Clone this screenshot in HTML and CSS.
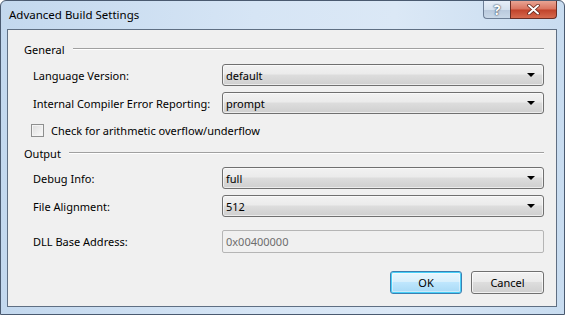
FILE: index.html
```html
<!DOCTYPE html>
<html>
<head>
    <title>Advanced Build Settings</title>
    <link rel="stylesheet" href="styles.css">
</head>
<body>
    <div class="window">
        <!-- Title bar -->
        <div class="titlebar">
            <span class="title">Advanced Build Settings</span>
            <div class="caption-buttons">
                <div class="cap-btn help">?</div>
                <div class="cap-btn close">
                    <svg width="13" height="11" viewBox="0 0 13 11">
                        <path d="M2 1.5 L11 9.5 M11 1.5 L2 9.5" stroke="#5b1e14" stroke-width="3.4" stroke-linecap="round"/>
                        <path d="M2 1.5 L11 9.5 M11 1.5 L2 9.5" stroke="#ffffff" stroke-width="2" stroke-linecap="round"/>
                    </svg>
                </div>
            </div>
        </div>

        <div class="client">
            <div class="group-header"><span>General</span><div class="rule"></div></div>

            <div class="row">
                <label>Language Version:</label>
                <div class="combo"><span>default</span><i class="arrow"></i></div>
            </div>
            <div class="row">
                <label>Internal Compiler Error Reporting:</label>
                <div class="combo"><span>prompt</span><i class="arrow"></i></div>
            </div>
            <div class="check-row">
                <div class="checkbox"></div>
                <span>Check for arithmetic overflow/underflow</span>
            </div>

            <div class="group-header output"><span>Output</span><div class="rule"></div></div>

            <div class="row debug">
                <label>Debug Info:</label>
                <div class="combo"><span>full</span><i class="arrow"></i></div>
            </div>
            <div class="row">
                <label>File Alignment:</label>
                <div class="combo"><span>512</span><i class="arrow"></i></div>
            </div>
            <div class="row address">
                <label>DLL Base Address:</label>
                <div class="textbox">0x00400000</div>
            </div>

            <div class="buttons">
                <div class="button default">OK</div>
                <div class="button">Cancel</div>
            </div>
        </div>
    </div>
</body>
</html>
```

FILE: styles.css
```css
body {
    margin: 0;
    font-family: 'Noto Sans', 'Open Sans', sans-serif;
    font-size: 11px;
    color: #000000;
    background: #ffffff;
    white-space: nowrap;
}

.window {
    width: 565px;
    height: 315px;
    box-sizing: border-box;
    border: 1px solid #4a5a70;
    border-radius: 6px 6px 0 0;
    background: linear-gradient(to right, #c3d8ee 0%, #d6e5f5 45%, #dbe8f6 70%, #c8dcf0 100%);
    padding: 0 7px 7px 6px;
    display: flex;
    flex-direction: column;
}

.titlebar {
    height: 28px;
    display: flex;
    align-items: flex-start;
}

.title {
    margin-top: 6px;
    margin-left: 2px;
    font-size: 11.5px;
    color: #000000;
}

.caption-buttons {
    margin-left: auto;
    display: flex;
}

.cap-btn {
    height: 18px;
    box-sizing: border-box;
    border: 1px solid #6e7f96;
    border-top: none;
    display: flex;
    align-items: center;
    justify-content: center;
}

.help {
    width: 27px;
    border-right: none;
    border-radius: 0 0 0 4px;
    background: linear-gradient(#e6eef8 0%, #d5e1ee 50%, #b9c9dc 51%, #c9d8e8 100%);
    color: #ffffff;
    font-weight: bold;
    font-size: 14px;
    text-shadow: 0 0 2px #2d3d55, 0 0 1px #2d3d55;
}

.close {
    width: 47px;
    border-color: #6a2e25;
    border-radius: 0 0 4px 0;
    background: linear-gradient(#e8a493 0%, #d9735e 48%, #c0422a 52%, #d66a4e 100%);
}

.client {
    flex: 1;
    border: 1px solid #5f6f83;
    background: #f0f0f0;
    padding: 0 12px 0 16px;
    display: flex;
    flex-direction: column;
}

.group-header {
    margin-top: 11px;
    height: 16px;
    display: flex;
    align-items: center;
}

.group-header .rule {
    flex: 1;
    height: 0;
    border-top: 1px solid #a0a0a0;
    border-bottom: 1px solid #ffffff;
    margin-left: 8px;
}

.group-header.output {
    margin-top: 7px;
}

.row {
    display: flex;
    align-items: center;
    margin-top: 7px;
    padding-left: 9px;
}

.row + .row {
    margin-top: 6px;
}

.row.debug {
    margin-top: 6px;
}

.row.address {
    margin-top: 13px;
}

.row label {
    width: 189px;
    flex-shrink: 0;
}

.combo {
    flex: 1;
    height: 22px;
    box-sizing: border-box;
    border: 1px solid #707070;
    border-radius: 3px;
    background: linear-gradient(#f2f2f2 0%, #ebebeb 45%, #dddddd 50%, #cfcfcf 100%);
    box-shadow: inset 0 0 0 1px rgba(255, 255, 255, 0.6);
    display: flex;
    align-items: center;
    padding: 0 8px 0 3px;
}

.combo span {
    flex: 1;
}

.arrow {
    width: 0;
    height: 0;
    border-left: 4px solid transparent;
    border-right: 4px solid transparent;
    border-top: 4px solid #000000;
}

.textbox {
    flex: 1;
    height: 23px;
    box-sizing: border-box;
    border: 1px solid #b5b5b5;
    border-radius: 2px;
    background: #f0f0f0;
    color: #6d6d6d;
    padding: 0 3px;
    display: flex;
    align-items: center;
}

.check-row {
    display: flex;
    align-items: center;
    margin-top: 8px;
    height: 16px;
    padding-left: 7px;
}

.checkbox {
    width: 13px;
    height: 13px;
    box-sizing: border-box;
    border: 1px solid #8e8f8f;
    background: linear-gradient(135deg, #dcdcdc, #fbfbfb);
    box-shadow: inset 0 0 0 1px #f4f4f4;
    margin-right: 7px;
}

.buttons {
    display: flex;
    justify-content: flex-end;
    margin-top: 18px;
    gap: 9px;
}

.button {
    width: 73px;
    height: 23px;
    box-sizing: border-box;
    border: 1px solid #707070;
    border-radius: 3px;
    background: linear-gradient(#f2f2f2 0%, #ebebeb 45%, #dddddd 50%, #cfcfcf 100%);
    box-shadow: inset 0 0 0 1px rgba(255, 255, 255, 0.7);
    display: flex;
    align-items: center;
    justify-content: center;
}

.button.default {
    width: 72px;
    border-color: #3c7fb1;
    box-shadow: inset 0 0 0 1px #48d0f8, inset 0 0 0 2px rgba(255, 255, 255, 0.4);
    background: linear-gradient(#eaf6fd 0%, #d9f0fc 45%, #bee6fd 50%, #a7d9f5 100%);
}
```
